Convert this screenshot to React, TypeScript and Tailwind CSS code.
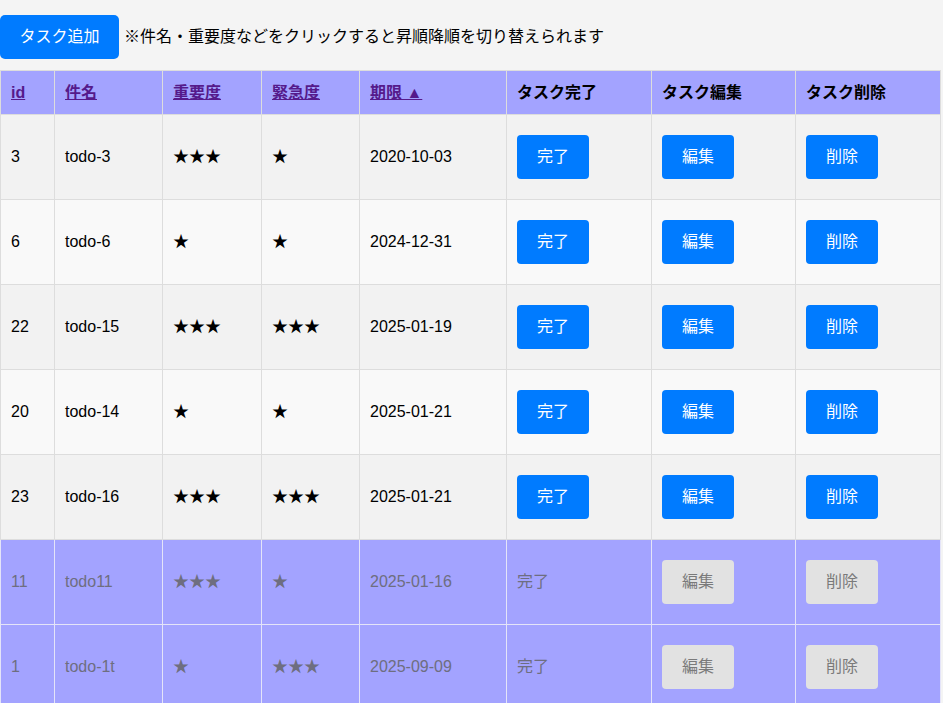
const tasks = [
  { id: 3, name: "todo-3", imp: 3, urg: 1, due: "2020-10-03", done: false },
  { id: 6, name: "todo-6", imp: 1, urg: 1, due: "2024-12-31", done: false },
  { id: 22, name: "todo-15", imp: 3, urg: 3, due: "2025-01-19", done: false },
  { id: 20, name: "todo-14", imp: 1, urg: 1, due: "2025-01-21", done: false },
  { id: 23, name: "todo-16", imp: 3, urg: 3, due: "2025-01-21", done: false },
  { id: 11, name: "todo11", imp: 3, urg: 1, due: "2025-01-16", done: true },
  { id: 1, name: "todo-1t", imp: 1, urg: 3, due: "2025-09-09", done: true },
];

const stars = (n: number) => "★".repeat(n);

function ActionButton({ label, disabled }: { label: string; disabled?: boolean }) {
  return (
    <button
      className={
        disabled
          ? "w-[72px] h-[44px] rounded-[4px] bg-[#e2e2e2] text-[#7a7a7a] text-base"
          : "w-[72px] h-[44px] rounded-[4px] bg-[#007bff] text-white text-base"
      }
    >
      {label}
    </button>
  );
}

export default function App() {
  const th = "border border-[#dddddd] px-[10px] py-0 h-[44px] leading-[20px] text-left font-bold";
  const link = "text-[#551a8b] underline";

  return (
    <div className="min-h-screen bg-[#f4f4f4] pt-[15px] font-['Liberation_Sans','Noto_Sans_CJK_JP',sans-serif] text-base text-black">
      <div className="flex items-center gap-[5px]">
        <button className="w-[119px] h-[44px] rounded-[5px] bg-[#007bff] text-white text-base">
          タスク追加
        </button>
        <span>※件名・重要度などをクリックすると昇順降順を切り替えられます</span>
      </div>

      <table className="mt-[11px] w-[940px] border-collapse table-fixed">
        <colgroup>
          <col className="w-[54px]" />
          <col className="w-[108px]" />
          <col className="w-[99px]" />
          <col className="w-[98px]" />
          <col className="w-[147px]" />
          <col className="w-[145px]" />
          <col className="w-[144px]" />
          <col className="w-[145px]" />
        </colgroup>
        <thead>
          <tr className="bg-[#a3a3ff]">
            <th className={th}><a className={link}>id</a></th>
            <th className={th}><a className={link}>件名</a></th>
            <th className={th}><a className={link}>重要度</a></th>
            <th className={th}><a className={link}>緊急度</a></th>
            <th className={th}><a className={link}>期限 ▲</a></th>
            <th className={th}>タスク完了</th>
            <th className={th}>タスク編集</th>
            <th className={th}>タスク削除</th>
          </tr>
        </thead>
        <tbody>
          {tasks.map((t, i) => {
            const rowBg = t.done
              ? "bg-[#a3a3ff] text-[#6e6e80]"
              : i % 2 === 0
              ? "bg-[#f2f2f2]"
              : "bg-[#f9f9f9]";
            const td = t.done
              ? "border border-[#e4e4f8] px-[10px] py-[20px]"
              : "border border-[#dddddd] px-[10px] py-[20px]";
            return (
              <tr key={t.id} className={`${rowBg} h-[85px]`}>
                <td className={td}>{t.id}</td>
                <td className={td}>{t.name}</td>
                <td className={td}>{stars(t.imp)}</td>
                <td className={td}>{stars(t.urg)}</td>
                <td className={td}>{t.due}</td>
                <td className={td}>{t.done ? "完了" : <ActionButton label="完了" />}</td>
                <td className={td}><ActionButton label="編集" disabled={t.done} /></td>
                <td className={td}><ActionButton label="削除" disabled={t.done} /></td>
              </tr>
            );
          })}
        </tbody>
      </table>
    </div>
  );
}
